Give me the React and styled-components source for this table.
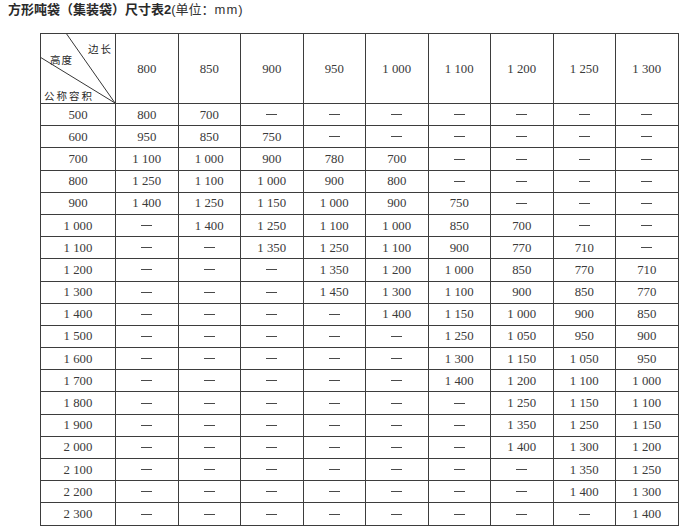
import React from "react";
import styled, { createGlobalStyle } from "styled-components";

const Global = createGlobalStyle`
  html, body { margin: 0; padding: 0; background: #fff; }
  body { font-family: "Liberation Serif", "Times New Roman", serif; }
`;

const Page = styled.div`
  padding: 2px 0 0 8px;
  width: 700px;
  height: 530px;
  box-sizing: border-box;
  overflow: hidden;
`;

const Title = styled.h1`
  margin: 0;
  font-family: "Liberation Sans", Arial, "Noto Sans CJK SC", sans-serif;
  font-size: 13px;
  line-height: 16px;
  color: #2a2a2a;
  font-weight: 400;
  white-space: nowrap;
`;

const TitleBold = styled.span`
  font-weight: 700;
`;

const Unit = styled.span`
  font-weight: 400;
  color: #333;
`;

const UnitMm = styled.span`
  letter-spacing: 1px;
`;

const Table = styled.table`
  margin: 15px 0 0 32px;
  border-collapse: collapse;
  table-layout: fixed;
  width: 638px;
  border: 1.5px solid #333;
`;

const Col = styled.col`
  width: ${(p) => p.$w}px;
`;

const Row = styled.tr`
  height: ${(p) => p.$h}px;
`;

const Cell = styled.td`
  border: 1px solid #3d3d3d;
  padding: 0;
  text-align: center;
  vertical-align: middle;
  font-family: "Liberation Serif", "Times New Roman", serif;
  font-size: 12.8px;
  color: #3a3a3a;
  line-height: 14px;
  white-space: nowrap;
`;

const Dash = styled.span`
  display: inline-block;
  width: 11px;
  height: 1px;
  background: #4a4a4a;
  vertical-align: middle;
  position: relative;
  top: -1px;
`;

const CornerCell = styled.td`
  border: 1px solid #3d3d3d;
  padding: 0;
  position: relative;
`;

const Diagonals = styled.svg`
  position: absolute;
  inset: 0;
  width: 100%;
  height: 100%;
  overflow: visible;
`;

const CornerLabel = styled.span`
  position: absolute;
  left: ${(p) => p.$x}px;
  top: ${(p) => p.$y}px;
  font-family: "Noto Sans CJK SC", "Noto Sans CJK JP", sans-serif;
  font-size: 10.5px;
  line-height: 12px;
  letter-spacing: ${(p) => p.$ls || 1}px;
  color: #2a2a2a;
  white-space: nowrap;
`;

const widths = [800, 850, 900, 950, "1 000", "1 100", "1 200", "1 250", "1 300"];

const D = null;
const rows = [
  ["500", ["800", "700", D, D, D, D, D, D, D]],
  ["600", ["950", "850", "750", D, D, D, D, D, D]],
  ["700", ["1 100", "1 000", "900", "780", "700", D, D, D, D]],
  ["800", ["1 250", "1 100", "1 000", "900", "800", D, D, D, D]],
  ["900", ["1 400", "1 250", "1 150", "1 000", "900", "750", D, D, D]],
  ["1 000", [D, "1 400", "1 250", "1 100", "1 000", "850", "700", D, D]],
  ["1 100", [D, D, "1 350", "1 250", "1 100", "900", "770", "710", D]],
  ["1 200", [D, D, D, "1 350", "1 200", "1 000", "850", "770", "710"]],
  ["1 300", [D, D, D, "1 450", "1 300", "1 100", "900", "850", "770"]],
  ["1 400", [D, D, D, D, "1 400", "1 150", "1 000", "900", "850"]],
  ["1 500", [D, D, D, D, D, "1 250", "1 050", "950", "900"]],
  ["1 600", [D, D, D, D, D, "1 300", "1 150", "1 050", "950"]],
  ["1 700", [D, D, D, D, D, "1 400", "1 200", "1 100", "1 000"]],
  ["1 800", [D, D, D, D, D, D, "1 250", "1 150", "1 100"]],
  ["1 900", [D, D, D, D, D, D, "1 350", "1 250", "1 150"]],
  ["2 000", [D, D, D, D, D, D, "1 400", "1 300", "1 200"]],
  ["2 100", [D, D, D, D, D, D, D, "1 350", "1 250"]],
  ["2 200", [D, D, D, D, D, D, D, "1 400", "1 300"]],
  ["2 300", [D, D, D, D, D, D, D, D, "1 400"]],
];

export default function App() {
  return (
    <Page>
      <Global />
      <Title>
        <TitleBold>方形吨袋（集装袋）尺寸表2</TitleBold>
        <Unit>
          (单位：<UnitMm>mm</UnitMm>)
        </Unit>
      </Title>
      <Table>
        <colgroup>
          <Col $w={75} />
          {widths.map((w) => (
            <Col key={w} $w={62.5} />
          ))}
        </colgroup>
        <tbody>
          <Row $h={70}>
            <CornerCell>
              <Diagonals viewBox="0 0 75 70" preserveAspectRatio="none">
                <line x1="26" y1="0" x2="75" y2="70" stroke="#333" strokeWidth="1" />
                <line x1="0" y1="24" x2="75" y2="70" stroke="#333" strokeWidth="1" />
              </Diagonals>
              <CornerLabel $x={47} $y={9} $ls={2}>边长</CornerLabel>
              <CornerLabel $x={9} $y={20} $ls={1}>高度</CornerLabel>
              <CornerLabel $x={3} $y={56} $ls={2}>公称容积</CornerLabel>
            </CornerCell>
            {widths.map((w) => (
              <Cell key={w}>{w}</Cell>
            ))}
          </Row>
          {rows.map(([label, vals]) => (
            <Row key={label} $h={22.2}>
              <Cell>{label}</Cell>
              {vals.map((v, i) =>
                v ? (
                  <Cell key={i}>{v}</Cell>
                ) : (
                  <Cell key={i}>
                    <Dash aria-label="—" />
                  </Cell>
                )
              )}
            </Row>
          ))}
        </tbody>
      </Table>
    </Page>
  );
}
